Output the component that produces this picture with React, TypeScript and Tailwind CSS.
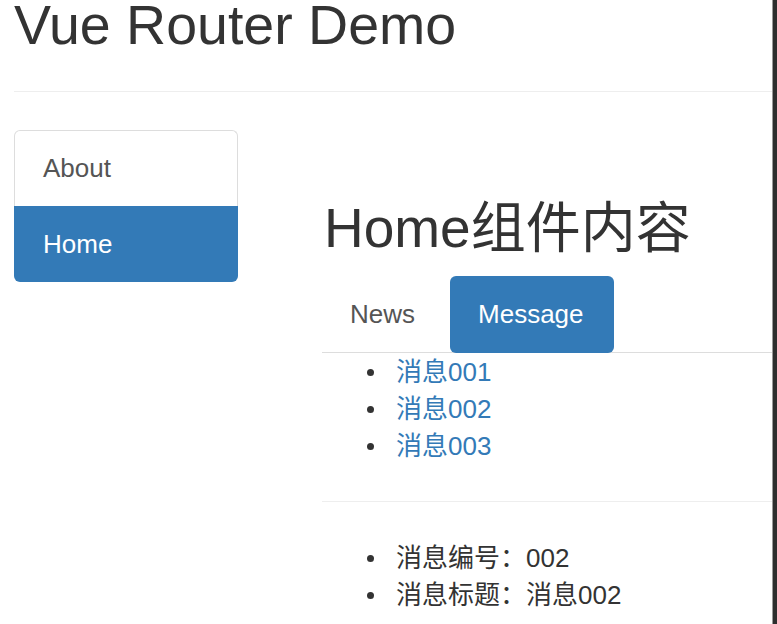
import React from "react";

const font = "font-['Liberation_Sans','Noto_Sans_CJK_SC',sans-serif]";

function Bullet({ children, link }: { children: React.ReactNode; link?: boolean }) {
  return (
    <li className="flex h-[37px] items-center">
      <span className="ml-[45px] mr-[22px] h-[7px] w-[7px] rounded-full bg-[#333]" />
      {link ? (
        <a href="#" className="text-[#337ab7]">
          {children}
        </a>
      ) : (
        <span className="text-[#333]">{children}</span>
      )}
    </li>
  );
}

export default function App() {
  const messages = ["消息001", "消息002", "消息003"];

  return (
    <div className={`flex h-[624px] w-full overflow-hidden bg-white ${font}`}>
      <main className="min-w-0 flex-1 pl-[14px]">
        <h1 className="text-[55.5px] leading-[50px] font-normal text-[#333]">Vue Router Demo</h1>
        <hr className="mt-[41px] border-t border-[#eee]" />

        <div className="mt-[38px] flex">
          {/* side nav */}
          <div className="w-[224px] shrink-0 text-[26px]">
            <a
              href="#"
              className="flex h-[76px] items-center rounded-t-[6px] border-x border-t border-[#ddd] pl-[28px] text-[#555]"
            >
              About
            </a>
            <a
              href="#"
              className="flex h-[76px] items-center rounded-b-[6px] bg-[#337ab7] pl-[29px] text-white"
            >
              Home
            </a>
          </div>

          {/* content */}
          <div className="ml-[84px] min-w-0 flex-1 pt-[68px] text-[26px]">
            <h2 className="pl-[2px] text-[55px] leading-[60px] font-normal text-[#333]">Home组件内容</h2>

            <div className="mt-[18px] flex gap-[7px] border-b border-[#ddd]">
              <a href="#" className="flex h-[76px] items-center px-[28px] text-[#555]">
                News
              </a>
              <a
                href="#"
                className="-mb-px flex h-[77px] items-center rounded-[6px] bg-[#337ab7] pl-[28px] pr-[30px] text-white"
              >
                Message
              </a>
            </div>

            <ul className="pt-px">
              {messages.map((m) => (
                <Bullet key={m} link>
                  {m}
                </Bullet>
              ))}
            </ul>

            <hr className="mt-[36px] border-t border-[#eee]" />

            <ul className="mt-[38px]">
              <Bullet>消息编号：002</Bullet>
              <Bullet>消息标题：消息002</Bullet>
            </ul>
          </div>
        </div>
      </main>
      <div className="w-[5px] shrink-0 border-l border-[#9a9a9a] bg-[#2e2e2e]" />
    </div>
  );
}
